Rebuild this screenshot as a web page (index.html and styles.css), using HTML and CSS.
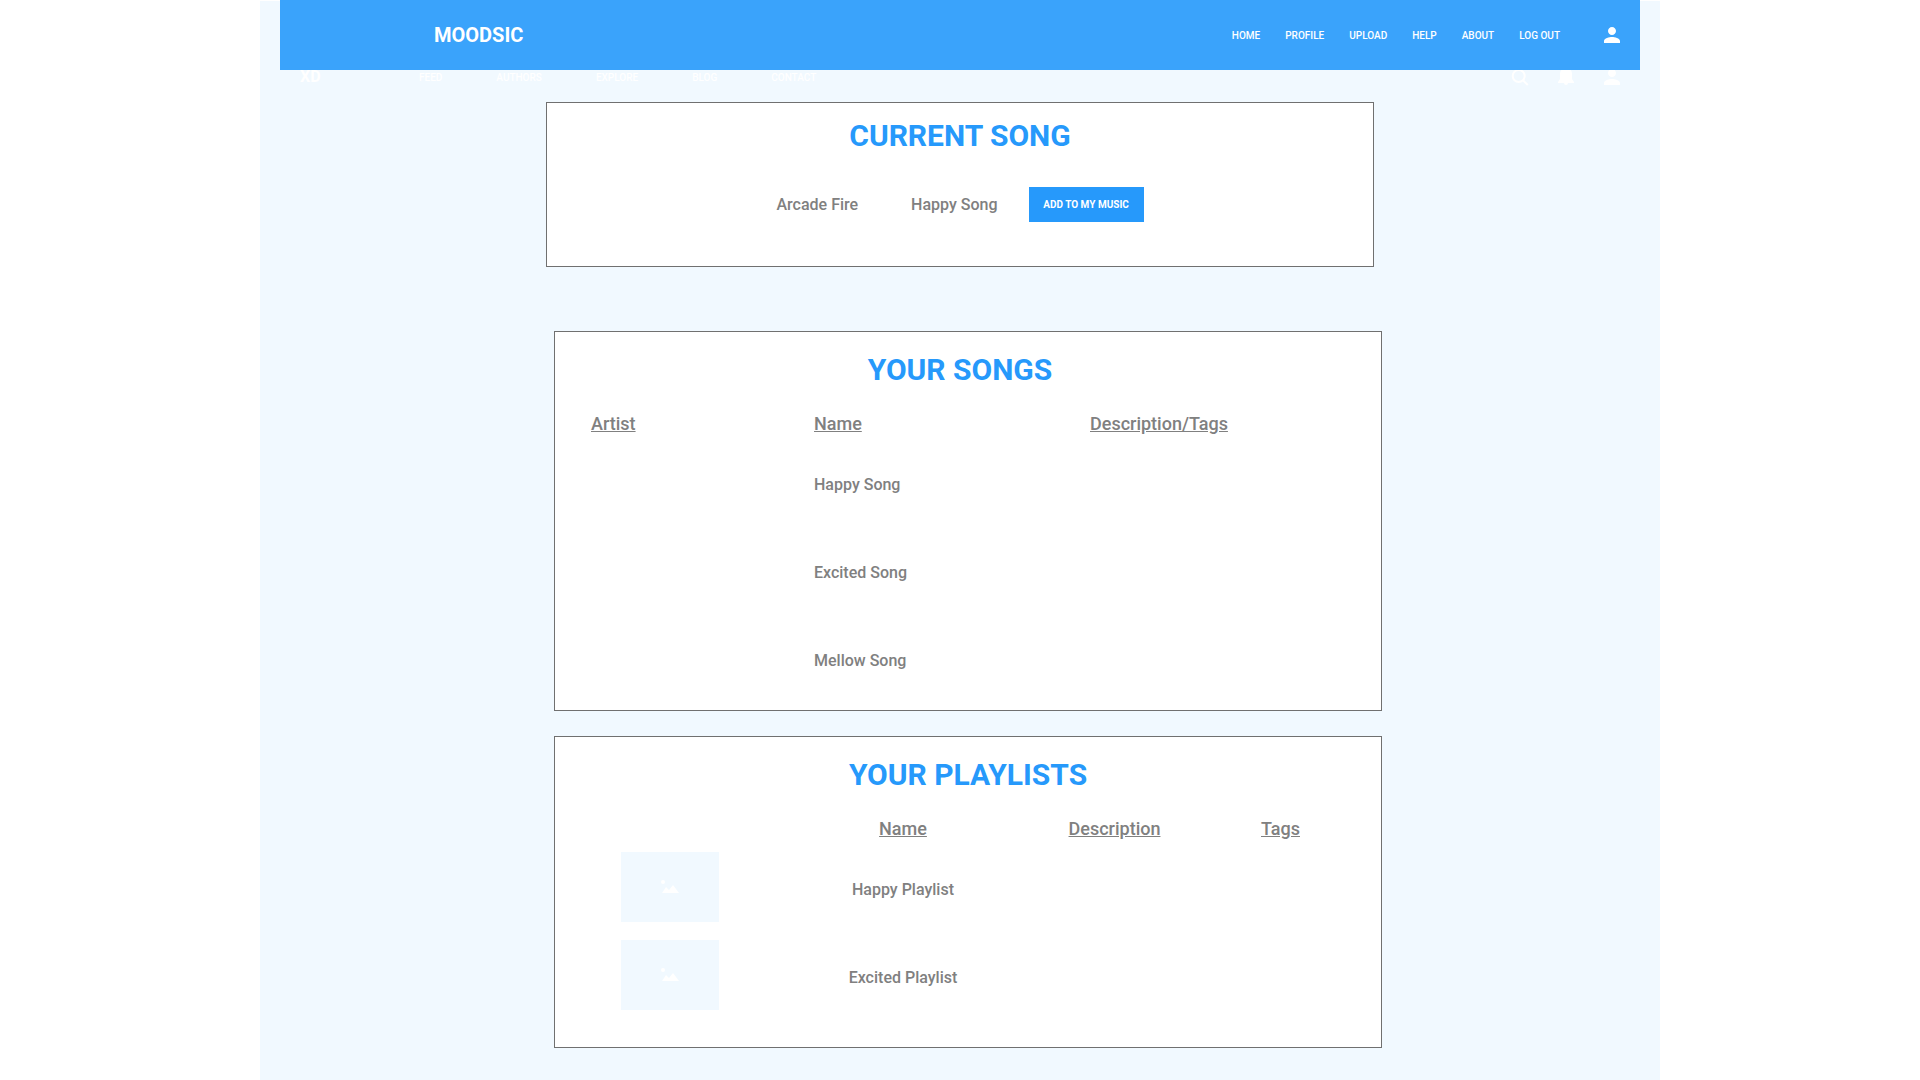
FILE: index.html
```html
<!DOCTYPE html>
<html lang="en">
<head>
<meta charset="utf-8">
<title>Moodsic</title>
<meta name="viewport" content="width=device-width, initial-scale=1">
<link rel="stylesheet" href="styles.css">
</head>
<body>
<svg class="sprite" aria-hidden="true">
  <symbol id="person" viewBox="0 0 24 24"><path d="M12 12c2.210 0 4-1.790 4-4s-1.790-4-4-4-4 1.790-4 4 1.790 4 4 4zm0 2c-2.670 0-8 1.340-8 4v2h16v-2c0-2.660-5.330-4-8-4z"/></symbol>
  <symbol id="picture" viewBox="0 0 18 14"><circle cx="2" cy="2" r="2"/><path d="M1 13l4-6 3 3 4-5 6 8z"/></symbol>
</svg>
<div class="page">
  <header class="topbar">
    <a class="brand" href="#">MOODSIC</a>
    <nav class="topnav" aria-label="Main">
      <a href="#">HOME</a>
      <a href="#">PROFILE</a>
      <a href="#">UPLOAD</a>
      <a href="#">HELP</a>
      <a href="#">ABOUT</a>
      <a href="#">LOG OUT</a>
    </nav>
    <a class="icon-link" href="#" aria-label="Account"><svg class="icon"><use href="#person"/></svg></a>
  </header>

  <div class="subbar">
    <a class="submark" href="#">XD</a>
    <nav class="subnav" aria-label="Sections">
      <a href="#">FEED</a>
      <a href="#">AUTHORS</a>
      <a href="#">EXPLORE</a>
      <a href="#">BLOG</a>
      <a href="#">CONTACT</a>
    </nav>
    <div class="subicons">
      <a class="icon-link" href="#" aria-label="Search"><svg class="icon" viewBox="0 0 24 24"><g fill="none" stroke="#fff" stroke-width="2"><circle cx="10.700" cy="11" r="6"/><path d="M15 15.300l4.800 4.700"/></g></svg></a>
      <a class="icon-link" href="#" aria-label="Notifications"><svg class="icon" viewBox="0 0 24 24"><path d="M12 3c-4 0-6 3-6 6v5l-2 3v1h6a2 2 0 0 0 4 0h6v-1l-2-3V9c0-3-2-6-6-6z"/></svg></a>
      <a class="icon-link" href="#" aria-label="User"><svg class="icon"><use href="#person"/></svg></a>
    </div>
  </div>

  <main>
    <section class="card current">
      <h2>CURRENT SONG</h2>
      <div class="now">
        <span class="artist">Arcade Fire</span>
        <span class="song">Happy Song</span>
        <button class="add" type="button">ADD TO MY MUSIC</button>
      </div>
    </section>

    <section class="card list songs">
      <h2>YOUR SONGS</h2>
      <table>
        <thead>
          <tr><th class="col-artist">Artist</th><th class="col-name">Name</th><th>Description/Tags</th></tr>
        </thead>
        <tbody>
          <tr><td></td><td>Happy Song</td><td></td></tr>
          <tr><td></td><td>Excited Song</td><td></td></tr>
          <tr><td></td><td>Mellow Song</td><td></td></tr>
        </tbody>
      </table>
    </section>

    <section class="card list playlists">
      <h2>YOUR PLAYLISTS</h2>
      <table>
        <thead>
          <tr><th class="col-cover"></th><th class="col-title">Name</th><th class="col-desc">Description</th><th class="col-tags">Tags</th></tr>
        </thead>
        <tbody>
          <tr><td class="cover"><div class="thumb"><svg><use href="#picture"/></svg></div></td><td>Happy Playlist</td><td></td><td></td></tr>
          <tr><td class="cover"><div class="thumb"><svg><use href="#picture"/></svg></div></td><td>Excited Playlist</td><td></td><td></td></tr>
        </tbody>
      </table>
    </section>
  </main>
</div>
</body>
</html>
```
FILE: styles.css
```css
* {
  box-sizing: border-box;
}

body {
  margin: 0;
  background: #fff;
  color: #808080;
  font: 500 16px/20px Roboto, "Liberation Sans", sans-serif;
}

a {
  color: #fff;
  text-decoration: none;
}

.sprite {
  position: absolute;
  width: 0;
  height: 0;
}

.icon {
  display: block;
  width: 24px;
  height: 24px;
  fill: #fff;
}

.page {
  max-width: 1400px;
  min-height: 100vh;
  margin: 0 auto;
  padding: 0 20px 32px;
  background: #f1f9ff;
  border-top: 1px solid #fff;
}

/* Top bar covers the upper edge of the secondary bar */
.topbar {
  position: relative;
  z-index: 1;
  display: flex;
  align-items: center;
  height: 70px;
  margin-top: -1px;
  padding: 0 16px 0 154px;
  background: #3aa3fb;
}

.brand {
  margin-right: auto;
  font-size: 20px;
  font-weight: 700;
}

.topnav,
.subnav {
  display: flex;
  padding-top: 2px;
  font-size: 10px;
}

.topnav {
  gap: 25px;
  margin-right: 40px;
}

.subbar {
  display: flex;
  align-items: center;
  height: 24px;
  margin-top: -5px;
  padding: 0 16px 0 20px;
}

.submark {
  width: 119px;
  font-weight: 700;
}

.subnav {
  gap: 54px;
}

.subicons {
  display: flex;
  gap: 22px;
  margin-left: auto;
}

.card {
  max-width: 828px;
  margin: 0 auto;
  background: #fff;
  border: 1px solid #707070;
}

h2 {
  margin: 0;
  color: #2699fb;
  font-size: 30px;
  font-weight: 700;
  line-height: 36px;
  text-align: center;
}

.current {
  min-height: 165px;
  margin: 13px auto 64px;
  padding-top: 15px;
}

.now {
  display: flex;
  align-items: center;
  justify-content: center;
  margin-top: 33px;
}

.artist {
  margin-right: 53px;
}

.song {
  margin-right: 31px;
}

.add {
  min-width: 115px;
  height: 35px;
  padding: 0 14px;
  background: #2699fb;
  border: 0;
  color: #fff;
  font: 700 10px/20px Roboto, "Liberation Sans", sans-serif;
}

.list {
  position: relative;
  left: 8px;
  margin-bottom: 25px;
  padding-top: 20px;
}

table {
  border-collapse: collapse;
  table-layout: fixed;
}

th,
td {
  padding: 0;
  font-weight: 500;
}

th {
  height: 50px;
  padding-top: 21px;
  font-size: 18px;
  text-decoration: underline;
}

td {
  height: 88px;
  padding-top: 6px;
}

.cover {
  padding-top: 0;
}

.songs h2 {
  padding-right: 16px;
}

.songs table {
  width: calc(100% - 36px);
  margin-left: 36px;
  text-align: left;
}

.songs {
  padding-bottom: 8px;
}

.col-artist {
  width: 223px;
}

.col-name {
  width: 276px;
}

.playlists {
  padding-bottom: 28px;
}

.playlists table {
  width: calc(100% - 28px);
  text-align: center;
}

.col-cover {
  width: 230px;
}

.col-title {
  width: 236px;
}

.col-desc {
  width: 187px;
}

.thumb {
  display: flex;
  align-items: center;
  justify-content: center;
  width: 98px;
  height: 70px;
  margin: 0 auto;
  background: #f1f9ff;
}

.thumb svg {
  width: 18px;
  height: 14px;
  fill: #fff;
}
```
